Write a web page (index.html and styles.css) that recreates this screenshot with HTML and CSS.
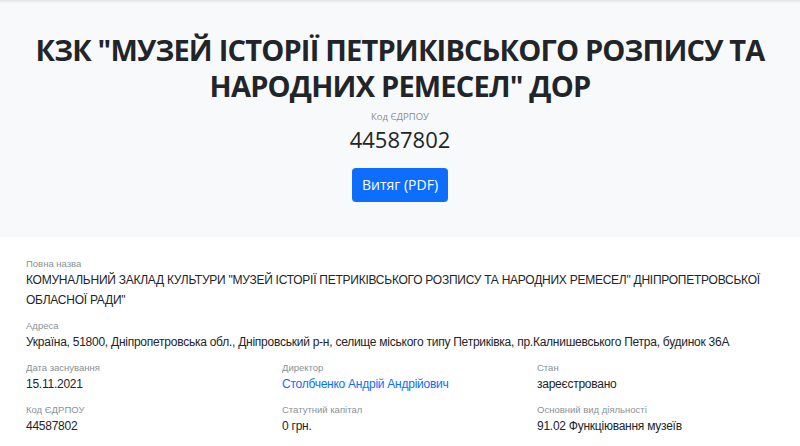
FILE: index.html
```html
<!DOCTYPE html>
<html lang="uk">
<head>
  <meta charset="UTF-8" />
  <meta name="viewport" content="width=device-width, initial-scale=1.0"/>
  <title>44587802</title>
  <link rel="stylesheet" href="styles.css">
</head>
<body>
  <!-- Шапка -->
  <header class="hero">
    <h1 class="hero-title">КЗК "МУЗЕЙ ІСТОРІЇ ПЕТРИКІВСЬКОГО РОЗПИСУ ТА НАРОДНИХ РЕМЕСЕЛ" ДОР</h1>
    <div class="hero-label">Код ЄДРПОУ</div>
    <div class="hero-code">44587802</div>
    <a class="btn" href="#">Витяг (PDF)</a>
  </header>

  <!-- Дані -->
  <main class="info">
    <div class="field">
      <div class="label">Повна назва</div>
      <div class="value">КОМУНАЛЬНИЙ ЗАКЛАД КУЛЬТУРИ "МУЗЕЙ ІСТОРІЇ ПЕТРИКІВСЬКОГО РОЗПИСУ ТА НАРОДНИХ РЕМЕСЕЛ" ДНІПРОПЕТРОВСЬКОЇ ОБЛАСНОЇ РАДИ"</div>
    </div>
    <div class="field">
      <div class="label">Адреса</div>
      <div class="value">Україна, 51800, Дніпропетровська обл., Дніпровський р-н, селище міського типу Петриківка, пр.Калнишевського Петра, будинок 36А</div>
    </div>
    <div class="grid">
      <div class="field">
        <div class="label">Дата заснування</div>
        <div class="value">15.11.2021</div>
      </div>
      <div class="field">
        <div class="label">Директор</div>
        <div class="value"><a href="#">Столбченко Андрій Андрійович</a></div>
      </div>
      <div class="field">
        <div class="label">Стан</div>
        <div class="value">зареєстровано</div>
      </div>
      <div class="field">
        <div class="label">Код ЄДРПОУ</div>
        <div class="value">44587802</div>
      </div>
      <div class="field">
        <div class="label">Статутний капітал</div>
        <div class="value">0 грн.</div>
      </div>
      <div class="field">
        <div class="label">Основний вид діяльності</div>
        <div class="value">91.02 Функціювання музеїв</div>
      </div>
    </div>
  </main>
</body>
</html>
```

FILE: styles.css
```css
* { box-sizing: border-box; }
body {
  margin: 0;
  font-family: "Liberation Sans", Arial, sans-serif;
  color: #212529;
  background: #fff;
}

/* Шапка */
.hero {
  background: #f8f9fa;
  box-shadow: inset 0 3px 3px -2px rgba(0,0,0,0.12);
  text-align: center;
  padding: 32px 16px 35px;
  font-family: "Open Sans", sans-serif;
}
.hero-title {
  margin: 0;
  font-size: 29px;
  line-height: 36px;
  font-weight: 700;
  letter-spacing: -0.8px;
}
.hero-label {
  margin-top: 6px;
  font-size: 9.5px;
  line-height: 14px;
  color: #868e96;
}
.hero-code {
  font-size: 22px;
  line-height: 30px;
}
.btn {
  display: inline-block;
  margin-top: 14px;
  padding: 7px 10px;
  background: #0d6efd;
  color: #fff;
  font-size: 14px;
  line-height: 20px;
  border-radius: 4px;
  text-decoration: none;
}

/* Дані */
.info {
  padding: 21px 26px 10px;
}
.field { margin-bottom: 10px; }
.label {
  font-size: 9.5px;
  line-height: 12px;
  color: #8a9198;
}
.value {
  font-size: 12px;
  line-height: 20px;
  letter-spacing: -0.25px;
}
.value a { color: #0d6efd; text-decoration: none; }
.grid {
  display: grid;
  grid-template-columns: 256px 255px 1fr;
}
```
